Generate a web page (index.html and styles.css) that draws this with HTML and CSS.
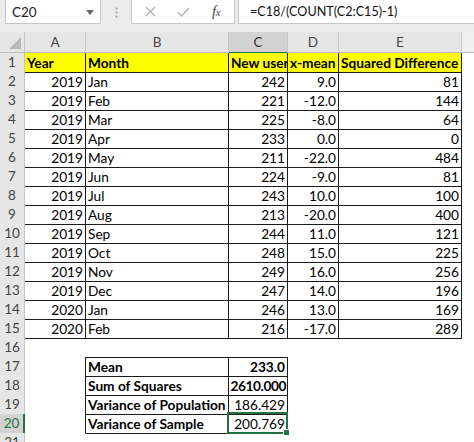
FILE: index.html
```html
<!DOCTYPE html>
<html>
<head>
<meta charset="utf-8">
<link rel="stylesheet" href="styles.css">
</head>
<body>
<div class="app">
  <div class="fbar">
    <div class="namebox">
      <span>C20</span>
      <svg class="caret" width="8" height="5" viewBox="0 0 8 5"><path d="M0 0H8L4 5Z" fill="#666"/></svg>
    </div>
    <div class="sep">
      <svg width="3" height="11" viewBox="0 0 3 11"><circle cx="1.5" cy="1.5" r="1" fill="#9a9a9a"/><circle cx="1.5" cy="5.5" r="1" fill="#9a9a9a"/><circle cx="1.5" cy="9.5" r="1" fill="#9a9a9a"/></svg>
    </div>
    <div class="fxbox">
      <svg class="ico x" width="11" height="11" viewBox="0 0 11 11"><path d="M1 1L10 10M10 1L1 10" stroke="#b0b0b0" stroke-width="1.3" fill="none"/></svg>
      <svg class="ico ok" width="13" height="10" viewBox="0 0 13 10"><path d="M1 5.5L4.5 9L12 1" stroke="#b0b0b0" stroke-width="1.4" fill="none"/></svg>
      <span class="fx">f<span class="fxx">x</span></span>
    </div>
    <div class="formula">=C18/(COUNT(C2:C15)-1)</div>
  </div>

  <div class="sheet">
    <div class="r hdr">
      <div class="corner"><svg width="12" height="12" viewBox="0 0 12 12"><path d="M12 0V12H0Z" fill="#b8b8b8"/></svg></div>
      <div class="ch">A</div>
      <div class="ch">B</div>
      <div class="ch sel">C</div>
      <div class="ch">D</div>
      <div class="ch">E</div>
      <div class="ch last"></div>
    </div>

    <div class="r"><div class="rh">1</div><div class="c b y h">Year</div><div class="c b y h">Month</div><div class="c b y h">New user</div><div class="c b y h">x-mean</div><div class="c b y h">Squared Difference</div><div class="c"></div></div>
    <div class="r"><div class="rh">2</div><div class="c b n">2019</div><div class="c b">Jan</div><div class="c b n">242</div><div class="c b n">9.0</div><div class="c b n">81</div><div class="c"></div></div>
    <div class="r"><div class="rh">3</div><div class="c b n">2019</div><div class="c b">Feb</div><div class="c b n">221</div><div class="c b n">-12.0</div><div class="c b n">144</div><div class="c"></div></div>
    <div class="r"><div class="rh">4</div><div class="c b n">2019</div><div class="c b">Mar</div><div class="c b n">225</div><div class="c b n">-8.0</div><div class="c b n">64</div><div class="c"></div></div>
    <div class="r"><div class="rh">5</div><div class="c b n">2019</div><div class="c b">Apr</div><div class="c b n">233</div><div class="c b n">0.0</div><div class="c b n">0</div><div class="c"></div></div>
    <div class="r"><div class="rh">6</div><div class="c b n">2019</div><div class="c b">May</div><div class="c b n">211</div><div class="c b n">-22.0</div><div class="c b n">484</div><div class="c"></div></div>
    <div class="r"><div class="rh">7</div><div class="c b n">2019</div><div class="c b">Jun</div><div class="c b n">224</div><div class="c b n">-9.0</div><div class="c b n">81</div><div class="c"></div></div>
    <div class="r"><div class="rh">8</div><div class="c b n">2019</div><div class="c b">Jul</div><div class="c b n">243</div><div class="c b n">10.0</div><div class="c b n">100</div><div class="c"></div></div>
    <div class="r"><div class="rh">9</div><div class="c b n">2019</div><div class="c b">Aug</div><div class="c b n">213</div><div class="c b n">-20.0</div><div class="c b n">400</div><div class="c"></div></div>
    <div class="r"><div class="rh">10</div><div class="c b n">2019</div><div class="c b">Sep</div><div class="c b n">244</div><div class="c b n">11.0</div><div class="c b n">121</div><div class="c"></div></div>
    <div class="r"><div class="rh">11</div><div class="c b n">2019</div><div class="c b">Oct</div><div class="c b n">248</div><div class="c b n">15.0</div><div class="c b n">225</div><div class="c"></div></div>
    <div class="r"><div class="rh">12</div><div class="c b n">2019</div><div class="c b">Nov</div><div class="c b n">249</div><div class="c b n">16.0</div><div class="c b n">256</div><div class="c"></div></div>
    <div class="r"><div class="rh">13</div><div class="c b n">2019</div><div class="c b">Dec</div><div class="c b n">247</div><div class="c b n">14.0</div><div class="c b n">196</div><div class="c"></div></div>
    <div class="r"><div class="rh">14</div><div class="c b n">2020</div><div class="c b">Jan</div><div class="c b n">246</div><div class="c b n">13.0</div><div class="c b n">169</div><div class="c"></div></div>
    <div class="r"><div class="rh">15</div><div class="c b n">2020</div><div class="c b">Feb</div><div class="c b n">216</div><div class="c b n">-17.0</div><div class="c b n">289</div><div class="c"></div></div>
    <div class="r"><div class="rh">16</div><div class="c"></div><div class="c bb"></div><div class="c bb"></div><div class="c"></div><div class="c"></div><div class="c"></div></div>
    <div class="r"><div class="rh">17</div><div class="c br"></div><div class="c b h">Mean</div><div class="c b n h">233.0</div><div class="c"></div><div class="c"></div><div class="c"></div></div>
    <div class="r"><div class="rh">18</div><div class="c br"></div><div class="c b h">Sum of Squares</div><div class="c b n h tight">2610.000</div><div class="c"></div><div class="c"></div><div class="c"></div></div>
    <div class="r"><div class="rh">19</div><div class="c br"></div><div class="c b h">Variance of Population</div><div class="c b n">186.429</div><div class="c"></div><div class="c"></div><div class="c"></div></div>
    <div class="r"><div class="rh rsel">20</div><div class="c br"></div><div class="c b h">Variance of Sample</div><div class="c b n active">200.769</div><div class="c"></div><div class="c"></div><div class="c"></div></div>
    <div class="r"><div class="rh">21</div><div class="c"></div><div class="c"></div><div class="c"></div><div class="c"></div><div class="c"></div><div class="c"></div></div>
  </div>
</div>
</body>
</html>
```

FILE: styles.css
```css
html, body {
  margin: 0;
  padding: 0;
  background: #fff;
}
.app {
  width: 474px;
  height: 442px;
  overflow: hidden;
  font-family: "Lato", "Open Sans", sans-serif;
  font-size: 13.7px;
  color: #000;
}
.fbar {
  height: 32px;
  background: #ececec;
  display: flex;
  align-items: flex-start;
  box-sizing: border-box;
}
.namebox {
  margin-left: 5px;
  width: 96px;
  height: 24px;
  box-sizing: border-box;
  background: #fff;
  border: 1px solid #c6c6c6;
  border-top: none;
  display: flex;
  align-items: center;
  justify-content: space-between;
  padding: 0 6px 0 6px;
  font-size: 13.5px;
  color: #222;
}
.caret { margin-top: 1px; }
.sep {
  width: 30px;
  height: 24px;
  display: flex;
  align-items: center;
  justify-content: center;
}
.fxbox {
  width: 104px;
  height: 24px;
  box-sizing: border-box;
  background: #fff;
  border: 1px solid #c6c6c6;
  border-top: none;
  display: flex;
  align-items: center;
  padding-left: 13px;
}
.ico.x { margin-right: 21px; }
.ico.ok { margin-right: 22px; }
.fx {
  font-family: "Liberation Serif", serif;
  font-style: italic;
  font-size: 15px;
  color: #444;
  letter-spacing: -0.5px;
}
.fxx { font-size: 11px; }
.formula {
  margin-left: 3px;
  flex: 1;
  height: 24px;
  box-sizing: border-box;
  background: #fff;
  border: 1px solid #c6c6c6;
  border-top: none;
  border-right: none;
  padding-left: 11px;
  line-height: 24px;
  font-size: 12.6px;
  color: #111;
}
.sheet {
  background: #fff;
}
.r {
  display: grid;
  grid-template-columns: 25px 61px 143px 59px 51px 123px 12px;
  height: 19px;
}
.r.hdr {
  height: 21px;
}
.corner {
  background: #e6e6e6;
  border-right: 1px solid #c4c4c4;
  border-bottom: 1px solid #bdbdbd;
  display: flex;
  align-items: flex-end;
  justify-content: flex-end;
  padding: 0 3px 3px 0;
}
.ch {
  background: #e6e6e6;
  border-right: 1px solid #c8c8c8;
  border-bottom: 1px solid #bdbdbd;
  text-align: center;
  line-height: 20px;
  color: #444;
  font-size: 13.5px;
}
.ch.sel {
  background: #d2d2d2;
  border-bottom: 1px solid #217346;
  color: #333;
}
.ch.last {
  background: #efefef;
  border-right: none;
}
.rh {
  background: #e6e6e6;
  border-right: 1px solid #c4c4c4;
  border-bottom: 1px solid #d6d6d6;
  text-align: center;
  line-height: 19px;
  color: #444;
  font-size: 13.5px;
}
.rh.rsel {
  background: #d2d2d2;
  color: #217346;
  border-right: 2px solid #217346;
}
.c {
  border-right: 1px solid transparent;
  border-bottom: 1px solid transparent;
  overflow: hidden;
  white-space: nowrap;
  line-height: 19px;
  padding: 0 2px;
}
.c.b { border-color: #1a1a1a; }
.c.bb { border-bottom-color: #1a1a1a; }
.c.br { border-right-color: #1a1a1a; }
.c.y { background: #ffff00; }
.c.n { text-align: right; padding-left: 0; }
.c.h { font-weight: bold; }
.c.tight { letter-spacing: -0.4px; padding-right: 1px; }
.c.active {
  position: relative;
  overflow: visible;
}
.c.active::before {
  content: "";
  position: absolute;
  left: -2px;
  top: -2px;
  right: -1px;
  bottom: -1px;
  border: 2px solid #217346;
}
.c.active::after {
  content: "";
  position: absolute;
  right: -3px;
  bottom: -3px;
  width: 5px;
  height: 5px;
  background: #217346;
  border: 1px solid #fff;
}
```
